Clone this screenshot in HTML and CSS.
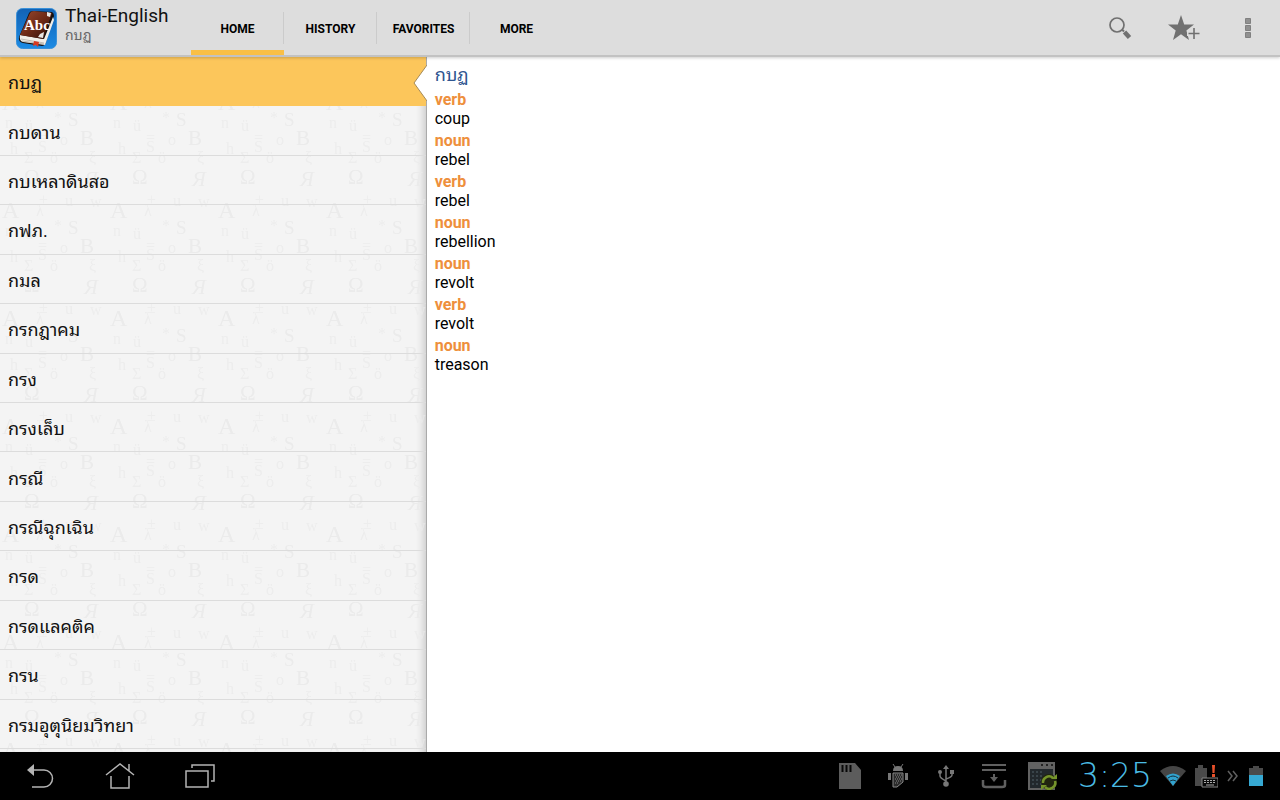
FILE: index.html
```html
<!DOCTYPE html>
<html lang="th">
<head>
  <meta charset="UTF-8" />
  <meta name="viewport" content="width=device-width, initial-scale=1.0" />
  <title>Thai-English</title>
  <link rel="stylesheet" href="styles.css">
</head>
<body>
  <header class="topbar">
    <svg class="app-icon" viewBox="0 0 41 41" aria-hidden="true">
      <defs>
        <linearGradient id="blue" x1="0" y1="0" x2="0" y2="1"><stop offset="0" stop-color="#1262b4"/><stop offset="1" stop-color="#1c8be4"/></linearGradient>
        <linearGradient id="leather" x1="0" y1="0" x2="1" y2="1"><stop offset="0" stop-color="#9a4a30"/><stop offset=".5" stop-color="#6e2a16"/><stop offset="1" stop-color="#2c0e08"/></linearGradient>
      </defs>
      <rect x=".5" y=".5" width="40" height="40" rx="6" fill="url(#blue)" stroke="#3a91d8"/>
      <path d="M3 29L13 5q1-2 4-2l19 1q2 1 2 4L30 34q-1 4-4 4L7 35q-5-1-4-6z" fill="#14100f"/>
      <path d="M4 27L28 31 37 9 38 12 29 37 7 34q-4-1-3-7z" fill="#f1eee8"/>
      <path d="M5 31L28 35M6 33L28 36" stroke="#aaa59c" stroke-width=".7"/>
      <path d="M4 27L14 5q1-2 4-2L36 5 27 31z" fill="url(#leather)"/>
      <path d="M31 4l4 1-1 4-3-1zM22 29l2-3 4-2-1 6z" fill="#e9e7e4"/>
      <path d="M18 33l5 1-1 5-2-2-3 1z" fill="#d93a20"/>
      <text x="8" y="22" class="app-icon-text">Abc</text>
    </svg>
    <div class="titles">
      <h1>Thai-English</h1>
      <p>กบฏ</p>
    </div>
    <nav class="tabs">
      <a href="#home" class="active">HOME</a>
      <a href="#history">HISTORY</a>
      <a href="#favorites">FAVORITES</a>
      <a href="#more">MORE</a>
    </nav>
    <div class="actions">
      <button type="button" aria-label="Search">
        <svg width="24" height="24" viewBox="0 0 24 24"><circle cx="9" cy="9" r="7" fill="none" stroke="#707070" stroke-width="1.700"/><path d="M14 13.500L16 15.500" stroke="#707070" stroke-width="2"/><path d="M16.500 16L21.500 21.500" stroke="#707070" stroke-width="4.500"/></svg>
      </button>
      <button type="button" aria-label="Add to favorites">
        <svg width="32" height="28" viewBox="0 0 32 28"><path d="M13 1l3.200 9.500H26l-7.600 5.900L21 26l-8-5.800L5 26l2.700-9.600L0 10.500h9.800z" fill="#707070"/><path d="M26 12v16M19 20h13" stroke="#ddd" stroke-width="4"/><path d="M26 14v11M20.500 19.500h11" stroke="#707070" stroke-width="1.600"/></svg>
      </button>
      <button type="button" aria-label="More options">
        <svg width="6" height="20" viewBox="0 0 6 20"><path d="M.5.500h5v5h-5zM.5 7.500h5v5h-5zM.5 14.500h5v5h-5z" fill="#909090" stroke="#808080"/></svg>
      </button>
    </div>
  </header>

  <main class="content">
    <section class="words">
      <svg class="letters" aria-hidden="true">
        <defs>
          <pattern id="glyphs" width="108" height="108" patternUnits="userSpaceOnUse">
            <g font-size="21">
              <text x="2" y="53" font-size="24">A</text>
              <text x="80" y="88">B</text>
              <text x="24" y="19">Ω</text>
              <text x="84" y="21" font-style="italic">Я</text>
              <text x="68" y="69" font-size="19">S</text>
            </g>
            <g font-size="16" opacity=".8">
              <text x="24" y="106">Σ</text>
              <text x="38" y="95">S</text>
              <text x="36" y="51">λ</text>
              <text x="5" y="71">n</text>
              <text x="25" y="74">ü</text>
              <text x="10" y="97">h</text>
              <text x="39" y="40">±</text>
              <text x="90" y="42">w</text>
              <text x="65" y="41">u</text>
              <text x="60" y="88">o</text>
              <text x="38" y="86">=</text>
              <text x="54" y="66">*</text>
              <text x="50" y="106">ö</text>
              <text x="89" y="106">ξ</text>
            </g>
          </pattern>
        </defs>
        <rect width="100%" height="100%" fill="url(#glyphs)"/>
      </svg>
      <ul class="word-list">
        <li class="selected"><a href="#w1">กบฏ</a>
          <svg class="notch" width="14" height="36" viewBox="0 0 14 36" aria-hidden="true"><path d="M14 0L1 18l13 18z" fill="#fff"/><path d="M14 0L1 18l13 18" fill="none" stroke="#a58a58"/></svg>
        </li>
        <li><a href="#w2">กบดาน</a></li>
        <li><a href="#w3">กบเหลาดินสอ</a></li>
        <li><a href="#w4">กฟภ.</a></li>
        <li><a href="#w5">กมล</a></li>
        <li><a href="#w6">กรกฎาคม</a></li>
        <li><a href="#w7">กรง</a></li>
        <li><a href="#w8">กรงเล็บ</a></li>
        <li><a href="#w9">กรณี</a></li>
        <li><a href="#w10">กรณีฉุกเฉิน</a></li>
        <li><a href="#w11">กรด</a></li>
        <li><a href="#w12">กรดแลคติค</a></li>
        <li><a href="#w13">กรน</a></li>
        <li><a href="#w14">กรมอุตุนิยมวิทยา</a></li>
      </ul>
    </section>

    <article class="entry">
      <h2>กบฏ</h2>
      <dl>
        <dt>verb</dt><dd>coup</dd>
        <dt>noun</dt><dd>rebel</dd>
        <dt>verb</dt><dd>rebel</dd>
        <dt>noun</dt><dd>rebellion</dd>
        <dt>noun</dt><dd>revolt</dd>
        <dt>verb</dt><dd>revolt</dd>
        <dt>noun</dt><dd>treason</dd>
      </dl>
    </article>
  </main>

  <footer class="sysbar">
    <div class="sys-nav">
      <button type="button" aria-label="Back">
        <svg width="28" height="26" viewBox="0 0 28 26" fill="none" stroke="#b4b4b4" stroke-width="1.500"><path d="M6 7h12a8.500 8.500 0 0 1 0 17H6"/><path d="M8 1v12L1 7z" fill="#b4b4b4" stroke="none"/></svg>
      </button>
      <button type="button" aria-label="Home">
        <svg width="30" height="28" viewBox="0 0 30 28" fill="none" stroke="#b4b4b4" stroke-width="1.500"><path d="M1 13L15 2l14 11M24 9V2M6 14v12h18V14"/></svg>
      </button>
      <button type="button" aria-label="Recent apps">
        <svg width="30" height="26" viewBox="0 0 30 26" fill="none" stroke="#b4b4b4" stroke-width="1.500"><path d="M1 8h22v16H1zM7 5V2h22v16h-3"/></svg>
      </button>
    </div>
    <div class="notices">
      <svg width="24" height="28" viewBox="0 0 24 28" aria-hidden="true"><path d="M1 1h16l6 7v19H1z" fill="#5c5c5c"/><path d="M4.500 3v7M8.500 3v7M12.500 3v7" stroke="#080808" stroke-width="2"/></svg>
      <svg width="22" height="24" viewBox="0 0 22 24" aria-hidden="true"><path d="M6 7q0-5 5-5t5 5zM1 9h3v7H1zM18 9h3v7h-3z" fill="#777"/><path d="M6 0l2 3M16 0l-2 3" stroke="#777"/><path d="M6 9h10v9l-6 5H6z" fill="#2a2a2a" stroke="#888"/><path d="M8 11h7M9 13h6M8 15h7M9 17h5M8 19h4" stroke="#888" stroke-dasharray="1 1"/></svg>
      <svg width="16" height="22" viewBox="0 0 16 22" aria-hidden="true"><path d="M8 2v17M2 8v3q0 2 6 5M14 7v3q0 2-6 4" fill="none" stroke="#777" stroke-width="1.500"/><circle cx="2" cy="7" r="2" fill="#777"/><circle cx="8" cy="19" r="2.800" fill="#777"/><path d="M8 0l3 4H5zM12 5h4v4h-4z" fill="#777"/></svg>
      <svg width="26" height="26" viewBox="0 0 26 26" aria-hidden="true"><path d="M1 2h24M1 7h24" stroke="#606060" stroke-width="2"/><path d="M2 17v5q0 2 3 2h16q3 0 3-2v-5" fill="none" stroke="#606060" stroke-width="2.500"/><path d="M13 11v7" stroke="#606060" stroke-width="2"/><path d="M9 14h8l-4 5z" fill="#606060"/></svg>
      <svg width="30" height="28" viewBox="0 0 30 28" aria-hidden="true"><path d="M1 0h27v28H1z" fill="#626262"/><path d="M3 7h23v19H3z" fill="#22282c"/><path d="M14 3h2M19 3h2M24 3h2" stroke="#222" stroke-width="2"/><path d="M5 10h12M5 14h10M5 18h10M5 22h10" stroke="#39444a" stroke-width="2" stroke-dasharray="2 2"/><circle cx="22" cy="20" r="8" fill="#20240f"/><path d="M16 21a6 6 0 0 1 10-5M28 19a6 6 0 0 1-10 6" fill="none" stroke="#75942b" stroke-width="2.500"/><path d="M24 17h6v-5zM20 23h-6v5z" fill="#75942b"/></svg>
    </div>
    <div class="status">
      <time class="clock" datetime="15:25">3:25</time>
      <svg width="26" height="22" viewBox="0 0 26 22" aria-hidden="true"><path d="M0 6q13-10 26 0L13 21z" fill="#454545"/><path d="M6 11q7-5 14 0l-7 10z" fill="#32a3cf"/><path d="M8 13q5-4 10 0M10 16q3-2 6 0" fill="none" stroke="#12303d"/></svg>
      <svg width="24" height="24" viewBox="0 0 24 24" aria-hidden="true"><path d="M1 4h3V1h5v3h4v18H1z" fill="#4a4a4a"/><path d="M18 1h3l-.5 8h-2zM18 10h3v3h-3z" fill="#e8502a"/><path d="M8 14h16v9H8z" fill="#090909" stroke="#858585"/><path d="M10 16.500h12M10 18.500h12" stroke="#aaa" stroke-dasharray="2 1"/><path d="M12 21h8" stroke="#aaa"/></svg>
      <svg width="14" height="12" viewBox="0 0 14 12" fill="none" stroke="#606060" stroke-width="1.500" aria-hidden="true"><path d="M2 1l4 5-4 5M7 1l4 5-4 5"/></svg>
      <svg width="16" height="22" viewBox="0 0 16 22" aria-hidden="true"><path d="M1 3h4V1h6v2h4v7H1z" fill="#4a4a4a"/><path d="M1 10h14v11H1z" fill="#36a9d3"/></svg>
    </div>
  </footer>
</body>
</html>
```
FILE: styles.css
```css
* {
  box-sizing: border-box;
}
body {
  margin: 0;
  height: 100vh;
  display: flex;
  flex-direction: column;
  font-family: Roboto, "Droid Sans Thai", "Noto Sans Thai Looped", Loma, "Noto Sans Thai", "Noto Sans", sans-serif;
  font-size: 16px;
  color: #111;
  background: #fff;
}
h1, h2, p, ul, dl, dd {
  margin: 0;
  padding: 0;
}
a {
  color: inherit;
  text-decoration: none;
}
button {
  border: none;
  background: none;
  padding: 0;
  display: flex;
  align-items: center;
  justify-content: center;
  cursor: pointer;
}
.topbar {
  height: 57px;
  flex: none;
  display: flex;
  background: #ddd;
  border-bottom: 2px solid #c2c2c2;
  box-shadow: 0 1px 3px rgba(0, 0, 0, 0.2);
  position: relative;
  z-index: 2;
}
.app-icon {
  width: 41px;
  height: 41px;
  margin: 8px 8px 0 16px;
}
.app-icon-text {
  font: bold 15px "Liberation Serif", serif;
  fill: #fff;
}
.titles {
  width: 126px;
  padding-top: 5px;
}
.titles h1 {
  font-size: 19px;
  font-weight: 400;
  line-height: 22px;
}
.titles p {
  font-size: 14px;
  line-height: 16px;
  color: #666;
}
.tabs {
  display: flex;
}
.tabs a {
  width: 93px;
  display: flex;
  align-items: center;
  justify-content: center;
  font-size: 12px;
  font-weight: 700;
  color: #000;
  border-bottom: 5px solid transparent;
  padding-top: 7px;
  background: linear-gradient(#cbcbcb, #cbcbcb) right 12px / 1px 32px no-repeat;
}
.tabs a:last-child {
  background: none;
}
.tabs a.active {
  border-bottom-color: #f9bf45;
}
.actions {
  display: flex;
  margin-left: auto;
}
.actions button {
  width: 64px;
}
.content {
  flex: 1;
  min-height: 0;
  display: grid;
  grid-template-columns: 1fr 2fr;
}
.words {
  position: relative;
  background: #f4f4f4;
  border-right: 1px solid #aaa;
  box-shadow: inset -8px 0 8px -6px rgba(0, 0, 0, 0.2);
}
.letters {
  position: absolute;
  inset: 0;
  width: 100%;
  height: 100%;
  font-family: "Liberation Serif", serif;
  fill: #ebebeb;
  pointer-events: none;
}
.word-list {
  position: relative;
  height: 100%;
  padding-bottom: 3px;
  list-style: none;
  display: grid;
  grid-auto-rows: 1fr;
}
.word-list li {
  position: relative;
  display: flex;
  border-bottom: 1px solid #dcdcdc;
}
.word-list a {
  flex: 1;
  display: flex;
  align-items: center;
  padding: 0 8px;
  font-size: 18px;
}
.word-list .selected {
  background: #fcc65b;
  border-bottom-color: #fcc65b;
}
.notch {
  position: absolute;
  top: 8px;
  right: -1px;
}
.entry {
  padding: 7px 8px;
}
.entry h2 {
  font-size: 18px;
  font-weight: 400;
  line-height: 22px;
  padding-bottom: 4px;
  color: #2f5590;
}
.entry dt {
  font-weight: 700;
  line-height: 19px;
  color: #ee8f3c;
}
.entry dd {
  line-height: 19px;
  padding-bottom: 3px;
  color: #000;
}
.sysbar {
  height: 48px;
  flex: none;
  display: flex;
  background: #000;
}
.sys-nav {
  display: flex;
}
.sys-nav button {
  width: 80px;
}
.notices {
  margin-left: auto;
  display: grid;
  grid-template-columns: repeat(5, 48px);
  place-items: center;
}
.status {
  display: flex;
  align-items: center;
  gap: 8px;
  padding: 0 16px 0 6px;
}
.clock {
  width: 80px;
  text-align: right;
  font-family: "DejaVu Sans", sans-serif;
  font-weight: 200;
  font-size: 33px;
  line-height: 48px;
  color: #4bbce4;
}
```
